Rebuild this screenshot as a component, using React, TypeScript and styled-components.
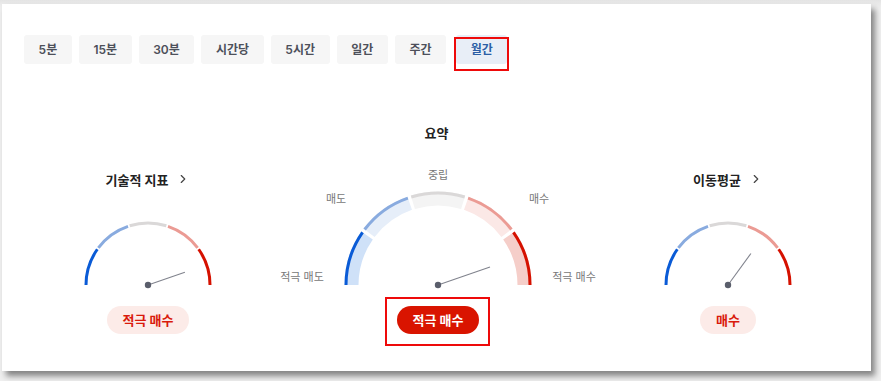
import React from 'react';
import styled, {createGlobalStyle} from 'styled-components';
import {ChevronRight} from 'lucide-react';

const GlobalStyle = createGlobalStyle`
  html, body {
    margin: 0;
    padding: 0;
    background: #e9e9e9;
  }
  body {
    font-family: "Inter", "Noto Sans CJK KR", sans-serif;
  }
`;

const periods = ['5분', '15분', '30분', '시간당', '5시간', '일간', '주간', '월간'];

// colours of the five gauge segments, strong sell -> strong buy
const strokes = ['#0a5bd6', '#89abdf', '#dad8d8', '#eb9b94', '#d51100'];
const fills = ['#cfe1f8', '#e6eef9', '#f4f4f4', '#fbe8e6', '#f5cec9'];

function pt(cx: number, cy: number, r: number, deg: number) {
  const a = (deg * Math.PI) / 180;
  return [cx + r * Math.cos(a), cy - r * Math.sin(a)];
}

function arc(cx: number, cy: number, r: number, from: number, to: number) {
  const [x1, y1] = pt(cx, cy, r, from);
  const [x2, y2] = pt(cx, cy, r, to);
  return `M${x1.toFixed(2)} ${y1.toFixed(2)} A${r} ${r} 0 0 1 ${x2.toFixed(2)} ${y2.toFixed(2)}`;
}

function segments(gap: number) {
  return [0, 1, 2, 3, 4].map(i => {
    const from = 180 - i * 36 - (i === 0 ? 0 : gap);
    const to = 180 - (i + 1) * 36 + (i === 4 ? 0 : gap);
    return [from, to];
  });
}

function SmallGauge({angle}: {angle: number}) {
  const cx = 70, cy = 70;
  const [nx, ny] = pt(cx, cy, 39, angle);
  return (
    <svg width="140" height="75" viewBox="0 0 140 75">
      {segments(0.8).map(([a, b], i) => (
        <path key={i} d={arc(cx, cy, 62, a, b)} stroke={strokes[i]} strokeWidth="3" fill="none" />
      ))}
      <line x1={cx} y1={cy} x2={nx} y2={ny} stroke="#80838d" strokeWidth="1.1" />
      <circle cx={cx} cy={cy} r="3.2" fill="#5a5e6b" />
    </svg>
  );
}

function BigGauge({angle}: {angle: number}) {
  const cx = 168, cy = 125;
  const [nx, ny] = pt(cx, cy, 55, angle);
  return (
    <svg width="336" height="130" viewBox="0 0 336 130">
      {segments(1.1).map(([a, b], i) => (
        <g key={i}>
          <path d={arc(cx, cy, 86.5, a, b)} stroke={fills[i]} strokeWidth="14" fill="none" />
          <path d={arc(cx, cy, 92, a, b)} stroke={strokes[i]} strokeWidth="3" fill="none" />
        </g>
      ))}
      <line x1={cx} y1={cy} x2={nx} y2={ny} stroke="#80838d" strokeWidth="1.1" />
      <circle cx={cx} cy={cy} r="3.2" fill="#5a5e6b" />
      <GaugeLabel x="32" y="121">적극 매도</GaugeLabel>
      <GaugeLabel x="66" y="43">매도</GaugeLabel>
      <GaugeLabel x="168" y="19">중립</GaugeLabel>
      <GaugeLabel x="269" y="43">매수</GaugeLabel>
      <GaugeLabel x="304" y="121">적극 매수</GaugeLabel>
    </svg>
  );
}

export default function App() {
  return (
    <>
      <GlobalStyle />
      <Page>
        <Card>
          <Tabs>
            {periods.map(p => (
              <Tab key={p} $active={p === '월간'}>{p}</Tab>
            ))}
          </Tabs>
          <SummaryTitle>요약</SummaryTitle>
          <Columns>
            <Column>
              <ColTitle>기술적 지표 <ChevronRight size={14} strokeWidth={2} /></ColTitle>
              <SmallGauge angle={19} />
              <Badge>적극 매수</Badge>
            </Column>
            <Column>
              <BigGauge angle={19} />
              <Badge $solid $marked>적극 매수</Badge>
            </Column>
            <Column>
              <ColTitle>이동평균 <ChevronRight size={14} strokeWidth={2} /></ColTitle>
              <SmallGauge angle={54} />
              <Badge>매수</Badge>
            </Column>
          </Columns>
        </Card>
      </Page>
    </>
  );
}

const Page = styled.div`
  padding: 4px 10px 10px 2px;
  background: linear-gradient(#e4e4e4, #efefef 8px);
`;

const Card = styled.div`
  background: #fff;
  box-shadow: 4px 5px 6px rgba(0, 0, 0, 0.45);
  padding: 31px 0 37px 0;
  display: flex;
  flex-direction: column;
`;

const Tabs = styled.div`
  display: flex;
  gap: 7px;
  padding-left: 22px;
`;

const Tab = styled.div<{$active?: boolean}>`
  position: relative;
  height: 29px;
  line-height: 29px;
  padding: 0 14.6px;
  border-radius: 3px;
  font-size: 12px;
  font-weight: 600;
  color: ${p => (p.$active ? '#2b5ea6' : '#4d505a')};
  background: ${p => (p.$active ? '#e8eef7' : '#f6f6f6')};
  ${p => p.$active && `
    margin-left: 3px;
    &::after {
      content: '';
      position: absolute;
      left: -2px;
      right: -2px;
      top: 2px;
      bottom: -7px;
      border: 2px solid #ee0a0a;
    }
  `}
`;

const SummaryTitle = styled.div`
  margin-top: 60px;
  text-align: center;
  font-size: 13px;
  line-height: 18px;
  font-weight: 700;
  color: #222;
`;

const Columns = styled.div`
  margin-top: 18px;
  padding-left: 1px;
  display: grid;
  grid-template-columns: repeat(3, 290px);
  align-items: end;
`;

const Column = styled.div`
  display: flex;
  flex-direction: column;
  align-items: center;
`;

const ColTitle = styled.div`
  display: flex;
  align-items: center;
  gap: 8px;
  height: 18px;
  margin-bottom: 27px;
  font-size: 13px;
  font-weight: 700;
  color: #222;
  svg {
    color: #444;
  }
`;

const GaugeLabel = styled.text`
  font-size: 11px;
  fill: #777;
  text-anchor: middle;
`;

const Badge = styled.div<{$solid?: boolean; $marked?: boolean}>`
  position: relative;
  margin-top: 16px;
  height: 28px;
  line-height: 28px;
  padding: 0 16px;
  border-radius: 14px;
  font-size: 13px;
  font-weight: 700;
  color: ${p => (p.$solid ? '#fff' : '#d91a0b')};
  background: ${p => (p.$solid ? '#d91400' : '#fcebe8')};
  ${p => p.$marked && `
    &::after {
      content: '';
      position: absolute;
      left: -12px;
      right: -11px;
      top: -9px;
      bottom: -12px;
      border: 2px solid #ee0a0a;
    }
  `}
`;
